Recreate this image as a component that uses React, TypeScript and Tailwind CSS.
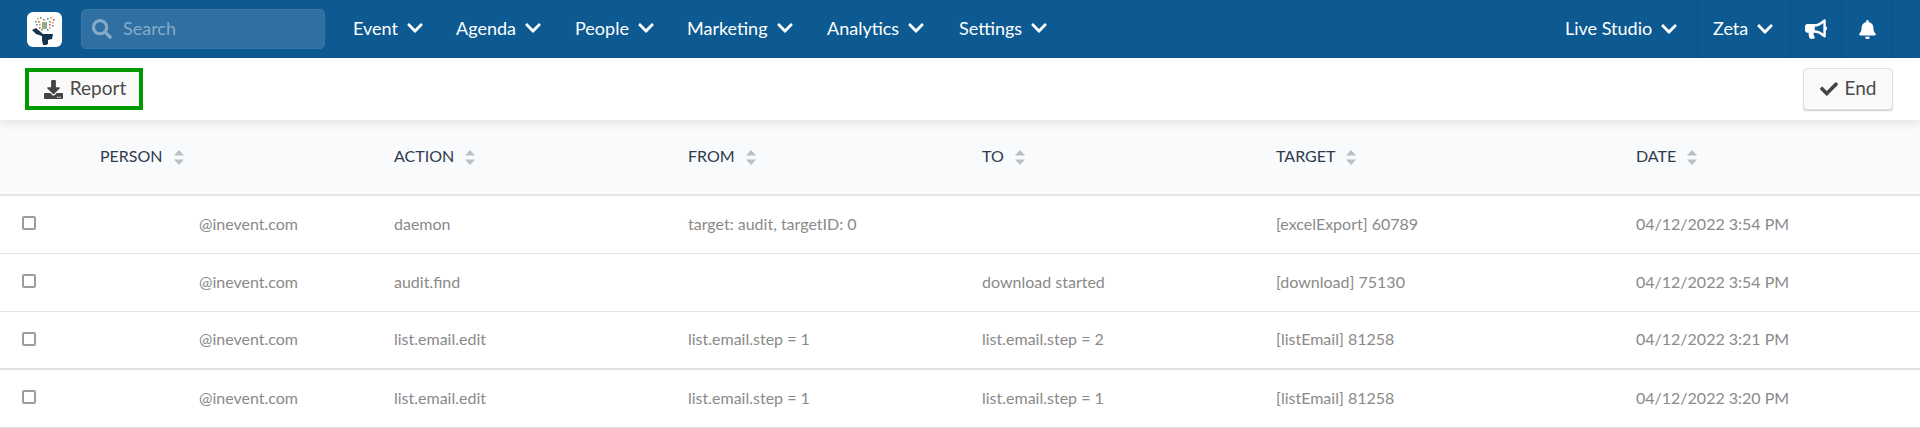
import { FaBell, FaBullhorn, FaCheck, FaChevronDown, FaDownload, FaSearch } from "react-icons/fa";

const navItems = ["Event", "Agenda", "People", "Marketing", "Analytics", "Settings"];
const navGaps = ["w-[103px]", "w-[119px]", "w-[112px]", "w-[140px]", "w-[132px]", "w-auto"];

const columns = ["Person", "Action", "From", "To", "Target", "Date"];

const rows = [
  { action: "daemon", from: "target: audit, targetID: 0", to: "", target: "[excelExport] 60789", date: "04/12/2022 3:54 PM" },
  { action: "audit.find", from: "", to: "download started", target: "[download] 75130", date: "04/12/2022 3:54 PM" },
  { action: "list.email.edit", from: "list.email.step = 1", to: "list.email.step = 2", target: "[listEmail] 81258", date: "04/12/2022 3:21 PM" },
  { action: "list.email.edit", from: "list.email.step = 1", to: "list.email.step = 1", target: "[listEmail] 81258", date: "04/12/2022 3:20 PM" },
];

const gridCols = "grid grid-cols-[100px_294px_294px_294px_294px_360px_1fr]";

function Logo() {
  const dots = [
    [10, 6, "#e8a33d"], [13, 5, "#4aa36b"], [16, 7, "#d9534f"], [20, 6, "#3f8fc4"], [23, 5, "#e8a33d"], [26, 7, "#d9534f"],
    [8, 9, "#4aa36b"], [11, 9, "#d9534f"], [22, 9, "#4aa36b"], [25, 10, "#e8a33d"], [9, 12, "#3f8fc4"], [12, 12, "#e8a33d"],
    [22, 12, "#d9534f"], [25, 13, "#3f8fc4"], [12, 15, "#d9534f"], [14, 17, "#4aa36b"], [22, 15, "#e8a33d"], [20, 17, "#3f8fc4"],
  ] as const;
  return (
    <svg viewBox="0 0 35 35" className="h-[35px] w-[35px] shrink-0">
      <rect width="35" height="35" rx="6" fill="#fff" />
      {dots.map(([x, y, c], i) => (
        <rect key={i} x={x} y={y} width="1.6" height="1.6" fill={c} />
      ))}
      <rect x="15" y="10" width="5" height="7" fill="#8fb08a" />
      <path d="M5 18l4-2 7 6-1 2-6-2z" fill="#15354f" />
      <path d="M15 22h11l-1 5-4 1v4l-2 1h-3l-1-5z" fill="#15354f" />
    </svg>
  );
}

function SortIcon() {
  return (
    <svg viewBox="0 0 10 15" className="h-[15px] w-[10px] shrink-0 fill-[#b7c0c6]">
      <path d="M5 0l5 5.5H0z" />
      <path d="M0 9.5h10L5 15z" />
    </svg>
  );
}

function Header() {
  return (
    <header className="flex h-[58px] items-center bg-[#0d5a92] text-[18px] text-white">
      <div className="ml-[27px]">
        <Logo />
      </div>
      <div className="ml-[19px] flex h-[40px] w-[244px] items-center rounded-[5px] border border-[#3a78a8] bg-[#2f6fa1] pl-[10px]">
        <FaSearch className="text-[20px] text-[#86abc8]" />
        <span className="ml-[11px] -translate-y-[1px] text-[18px] text-[#86abc8]">Search</span>
      </div>
      <nav className="ml-[28px] flex flex-1 -translate-y-[1px] items-center">
        {navItems.map((item, i) => (
          <div key={item} className={`flex items-center gap-[8px] ${navGaps[i]}`}>
            <span>{item}</span>
            <FaChevronDown className="text-[18px]" />
          </div>
        ))}
      </nav>
      <div className="flex h-full items-center pr-[27px]">
        <div className="flex h-full w-[133px] items-center gap-[8px] border-r border-[#0b5285]">
          <span className="-translate-y-[1px]">Live Studio</span>
          <FaChevronDown className="text-[18px]" />
        </div>
        <div className="flex h-full w-[93px] items-center gap-[8px] border-r border-[#0b5285] pl-[15px]">
          <span className="-translate-y-[1px]">Zeta</span>
          <FaChevronDown className="text-[18px]" />
        </div>
        <div className="flex h-full w-[51px] items-center justify-center border-r border-[#0b5285]">
          <FaBullhorn className="text-[22px]" />
        </div>
        <div className="flex h-full w-[51px] items-center justify-center border-r border-[#0b5285]">
          <FaBell className="text-[19px]" />
        </div>
      </div>
    </header>
  );
}

function Toolbar() {
  return (
    <div className="relative z-10 flex h-[62px] items-center justify-between bg-white pl-[25px] pr-[27px] shadow-[0_2px_10px_rgba(0,0,0,0.12)]">
      <button className="flex h-[42px] w-[118px] items-center justify-center gap-[7px] border-4 border-[#009a00] bg-[#fafafa] pl-[2px] text-[19px] text-[#4a4a4a]">
        <FaDownload className="text-[19px] text-[#444]" />
        <span className="-translate-y-[1px]">Report</span>
      </button>
      <button className="flex h-[42px] w-[90px] items-center justify-center gap-[7px] rounded-[4px] border border-[#e0e0e0] bg-[#fafafa] text-[19px] text-[#4a4a4a] shadow-[0_1px_1px_rgba(0,0,0,0.2)]">
        <FaCheck className="text-[18px] text-[#444]" />
        <span className="-translate-y-[1px]">End</span>
      </button>
    </div>
  );
}

function AuditTable() {
  return (
    <div>
      <div className={`${gridCols} h-[76px] items-center border-b-2 border-[#e3e5e8] bg-[#f9fafc]`}>
        <div />
        {columns.map((col) => (
          <div key={col} className="flex items-center gap-[11px] text-[16px] text-[#2d3b4e] uppercase">
            <span className="-translate-y-[1px]">{col}</span>
            <SortIcon />
          </div>
        ))}
      </div>
      {rows.map((row, i) => (
        <div
          key={i}
          className={`${gridCols} h-[58px] items-center text-[16px] text-[#8a8a8a] ${i === 2 ? "border-b-2 border-[#dde0e0]" : "border-b border-[#e3e5e5]"}`}
        >
          <div className="pl-[22px]">
            <div className="mb-[3px] h-[14px] w-[14px] rounded-[2px] border-2 border-[#97a09f]" />
          </div>
          <div className="-translate-y-[1px] pl-[99px]">@inevent.com</div>
          <div className="-translate-y-[1px]">{row.action}</div>
          <div className="-translate-y-[1px]">{row.from}</div>
          <div className="-translate-y-[1px]">{row.to}</div>
          <div className="-translate-y-[1px]">{row.target}</div>
          <div className="-translate-y-[1px]">{row.date}</div>
        </div>
      ))}
    </div>
  );
}

export default function App() {
  return (
    <div className="h-[428px] overflow-hidden bg-white font-['Lato','Liberation_Sans',sans-serif]">
      <Header />
      <Toolbar />
      <AuditTable />
    </div>
  );
}
